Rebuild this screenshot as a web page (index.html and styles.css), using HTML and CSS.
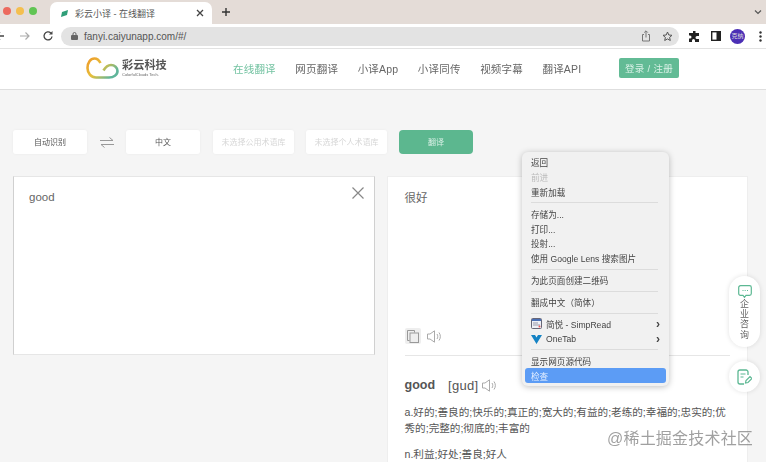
FILE: index.html
```html
<!DOCTYPE html>
<html lang="zh-CN">
  <head>
    <meta charset="UTF-8" />
    <title>彩云小译 - 在线翻译</title>
    <link rel="stylesheet" href="styles.css">
  </head>
  <body>
    <div class="tabstrip">
      <div class="traffic">
        <span class="dot red"></span>
        <span class="dot yellow"></span>
        <span class="dot green"></span>
      </div>
      <div class="tab">
        <svg class="favicon" width="8" height="7" viewBox="0 0 8 7"><path d="M1 2 7 0 6 5 0 7z" fill="#2f9e78"/></svg>
        <span class="tab-title">彩云小译 - 在线翻译</span>
        <svg class="tab-close" width="8" height="8" viewBox="0 0 8 8"><path d="M1 1l6 6M7 1 1 7" stroke="#444" stroke-width="1.3"/></svg>
      </div>
      <svg class="tab-new" width="10" height="10" viewBox="0 0 10 10"><path d="M5 1v8M1 5h8" stroke="#333" stroke-width="1.4"/></svg>
      <svg class="tab-more" width="8" height="6" viewBox="0 0 8 6"><path d="M1 1.500l3 3 3-3" fill="none" stroke="#555" stroke-width="1.2"/></svg>
    </div>

    <div class="toolbar">
      <svg class="nav" width="12" height="12" viewBox="0 0 12 12"><path d="M8 6H0M4 2 0 6l4 4" fill="none" stroke="#444" stroke-width="1.3"/></svg>
      <svg class="nav nav-fwd" width="12" height="12" viewBox="0 0 12 12"><path d="M1 6h9M6.500 2.500 10 6l-3.500 3.500" fill="none" stroke="#aaa" stroke-width="1.2"/></svg>
      <svg class="nav nav-reload" width="12" height="12" viewBox="0 0 12 12"><path d="M10 6.500A4 4 0 1 1 8.800 3" fill="none" stroke="#444" stroke-width="1.3"/><path d="M10.500 1v3.500H7z" fill="#444"/></svg>
      <div class="omnibox">
        <svg class="lock" width="7" height="8" viewBox="0 0 7 8"><path d="M2 3.500V2a1.500 1.500 0 0 1 3 0v1.500" fill="none" stroke="#666"/><rect y="3" width="7" height="5" rx="1" fill="#666"/></svg>
        <span class="url">fanyi.caiyunapp.com/#/</span>
        <svg class="omni-share" width="10" height="12" viewBox="0 0 10 12"><path d="M3 4.500H1.500v6.500h7V4.500H7M5 7.500V1M3.200 2.600 5 .8l1.800 1.800" fill="none" stroke="#777"/></svg>
        <svg class="omni-star" width="11" height="11" viewBox="0 0 11 11"><path d="M5.500 1l1.300 3 3.200.3-2.400 2.100.7 3.100-2.800-1.600-2.800 1.600.7-3.100L1 4.300 4.200 4z" fill="none" stroke="#555"/></svg>
      </div>
      <svg class="ext" width="11" height="11" viewBox="0 0 11 11"><path d="M4 0h2.500v2H10v3H8a1.500 1.500 0 0 0 0 3h2v3H6V9.500a1.500 1.500 0 0 0-3 0V11H0V7.500h1a1.500 1.500 0 0 0 0-3H0V2h4z" fill="#222"/></svg>
      <svg class="side" width="10" height="10" viewBox="0 0 10 10"><rect x=".7" y=".7" width="8.600" height="8.600" fill="none" stroke="#222" stroke-width="1.4"/><rect x="5.500" y="1" width="4" height="8" fill="#222"/></svg>
      <span class="avatar">克纳</span>
      <svg class="kebab" width="3" height="11" viewBox="0 0 3 11"><circle cx="1.500" cy="1.500" r="1.200" fill="#333"/><circle cx="1.500" cy="5.500" r="1.200" fill="#333"/><circle cx="1.500" cy="9.500" r="1.200" fill="#333"/></svg>
    </div>

    <header class="site-header">
      <div class="logo">
        <svg width="33" height="22" viewBox="0 0 33 22">
          <defs>
            <linearGradient id="cloud" x1="0" y1="0" x2="1" y2="0.600">
              <stop offset="0" stop-color="#ef9a2a"/>
              <stop offset=".5" stop-color="#e6c03c"/>
              <stop offset="1" stop-color="#5fb59a"/>
            </linearGradient>
          </defs>
          <path d="M14.500 6C13 3 10.500 1.500 8.500 1.500 4.500 1.500 1.500 5.500 1.500 11c0 5 3.500 9.500 8.500 9.500h13c4.500 0 8.500-2.500 8.500-6.500 0-3.500-3-6-6.500-6-3 0-5.500 2-7.500 5.500" fill="none" stroke="url(#cloud)" stroke-width="2.600"/>
        </svg>
        <div class="logo-text">
          <div class="logo-name">彩云科技</div>
          <div class="logo-sub">ColorfulClouds Tech.</div>
        </div>
      </div>
      <nav class="site-nav">
        <a class="active">在线翻译</a>
        <a>网页翻译</a>
        <a>小译App</a>
        <a>小译同传</a>
        <a>视频字幕</a>
        <a>翻译API</a>
      </nav>
      <button class="login">登录 / 注册</button>
    </header>

    <main class="content">
      <div class="controls">
        <div class="select lang">自动识别</div>
        <svg class="swap" width="14" height="11" viewBox="0 0 14 11"><path d="M0 3.500h13L9.500.5M14 7.500H1l3.500 3" fill="none" stroke="#999" stroke-width="1"/></svg>
        <div class="select lang">中文</div>
        <div class="select lib">未选择公用术语库</div>
        <div class="select lib">未选择个人术语库</div>
        <button class="go">翻译</button>
      </div>

      <div class="panels">
        <section class="panel source">
          <p class="source-text">good</p>
          <svg class="clear" width="12" height="12" viewBox="0 0 12 12"><path d="M.5.500l11 11M11.500.500l-11 11" stroke="#888" stroke-width="1.200"/></svg>
        </section>
        <section class="panel target">
          <p class="target-text">很好</p>
          <div class="target-tools">
            <span class="copy-wrap">
              <svg width="12" height="13" viewBox="0 0 12 13"><path d="M.5.500h7v2M.5.500v10h2" fill="none" stroke="#999"/><rect x="3" y="3" width="8.500" height="9.500" fill="none" stroke="#999"/></svg>
            </span>
            <svg width="15" height="13" viewBox="0 0 15 13"><path d="M.5 4H3L7.500.8v11.400L3 9H.5zM10 4c1 1.500 1 3.500 0 5M12 2.500c1.800 2.500 1.800 5.500 0 8" fill="none" stroke="#aaa"/></svg>
          </div>
          <div class="dict">
            <div class="dict-head">
              <b>good</b>
              <span class="phonetic">[gud]</span>
              <svg width="15" height="13" viewBox="0 0 15 13"><path d="M.5 4H3L7.500.8v11.400L3 9H.5zM10 4c1 1.500 1 3.500 0 5M12 2.500c1.800 2.500 1.800 5.500 0 8" fill="none" stroke="#aaa"/></svg>
            </div>
            <p>a.好的;善良的;快乐的;真正的;宽大的;有益的;老练的;幸福的;忠实的;优</p>
            <p class="cont">秀的;完整的;彻底的;丰富的</p>
            <p>n.利益;好处;善良;好人</p>
          </div>
        </section>
      </div>
    </main>

    <div class="context-menu">
      <div class="item">返回</div>
      <div class="item off">前进</div>
      <div class="item">重新加载</div>
      <hr>
      <div class="item">存储为...</div>
      <div class="item">打印...</div>
      <div class="item">投射...</div>
      <div class="item">使用 Google Lens 搜索图片</div>
      <hr>
      <div class="item">为此页面创建二维码</div>
      <hr>
      <div class="item">翻成中文（简体）</div>
      <hr>
      <div class="item sub">
        <svg width="11" height="11" viewBox="0 0 11 11"><rect x=".5" y=".5" width="10" height="10" rx="1" fill="#eef0f6" stroke="#667"/><rect x="1" y="1" width="9" height="2" fill="#4a6fb5"/><path d="M2 5h5M2 7h7" stroke="#99a"/><circle cx="8.500" cy="8.500" r="1" fill="#e55"/></svg>
        <span>简悦 - SimpRead</span><i>›</i>
      </div>
      <div class="item sub">
        <svg width="11" height="11" viewBox="0 0 11 11"><path d="M0 2h4l1.500 2.500L7 2h4L5.500 11z" fill="#1583c4"/></svg>
        <span>OneTab</span><i>›</i>
      </div>
      <hr>
      <div class="item">显示网页源代码</div>
      <div class="item picked">检查</div>
    </div>

    <aside class="float-tools">
      <div class="consult">
        <svg width="14" height="13" viewBox="0 0 14 13"><path d="M2.500.7h9a1.800 1.800 0 0 1 1.800 1.800v6a1.800 1.800 0 0 1-1.800 1.800H8l-1.500 2-1.500-2H2.500A1.800 1.800 0 0 1 .7 8.500v-6A1.800 1.800 0 0 1 2.500.7z" fill="none" stroke="#5cb893" stroke-width="1.200"/><path d="M4.500 5.500h1M6.700 5.500h1M9 5.500h1" stroke="#5cb893"/></svg>
        <span>企</span><span>业</span><span>咨</span><span>询</span>
      </div>
      <div class="feedback">
        <svg width="15" height="16" viewBox="0 0 15 16"><path d="M11 6V3a2 2 0 0 0-2-2H3a2 2 0 0 0-2 2v10a2 2 0 0 0 2 2h4" fill="none" stroke="#5cb893" stroke-width="1.300"/><path d="M3.500 5h5M3.500 8h3" stroke="#5cb893" stroke-width="1.200"/><path d="M8.500 14l.5-2.500 4-4 2 2-4 4z" fill="none" stroke="#5cb893" stroke-width="1.200"/></svg>
      </div>
    </aside>

    <div class="watermark">@稀土掘金技术社区</div>
  </body>
</html>
```

FILE: styles.css
```css
* {
  box-sizing: border-box;
}

body {
  margin: 0;
  height: 462px;
  overflow: hidden;
  font-family: "Liberation Sans", "Noto Sans CJK SC", sans-serif;
  background-color: #f5f5f5;
  color: #555;
  filter: blur(0.35px);
}

svg {
  display: block;
  flex: none;
}

/* browser chrome */
.tabstrip {
  display: flex;
  align-items: flex-end;
  height: 24px;
  background: #e4dcd7;
}

.traffic {
  display: flex;
  gap: 5px;
  align-self: center;
  width: 50px;
  margin-bottom: 2px;
  padding-left: 3px;
}

.dot {
  width: 8px;
  height: 8px;
  border-radius: 50%;
}

.red { background: #ec6a5e; }
.yellow { background: #f4bf4f; }
.green { background: #61c554; }

.tab {
  display: flex;
  align-items: center;
  width: 162px;
  height: 22px;
  padding: 0 8px 0 11px;
  background: white;
  border-radius: 7px 7px 0 0;
}

.tab-title {
  flex: 1;
  margin-left: 6px;
  font-size: 9px;
  color: #555;
}

.tab-new {
  align-self: center;
  margin-left: 9px;
}

.tab-more {
  align-self: center;
  margin-left: auto;
  margin-right: 4px;
}

.toolbar {
  display: flex;
  align-items: center;
  height: 25px;
  background: white;
  border-bottom: 1px solid #e2e2e2;
}

.nav {
  margin-left: -4px;
}

.nav-fwd {
  margin-left: 11px;
}

.nav-reload {
  margin-left: 11px;
}

.omnibox {
  display: flex;
  align-items: center;
  width: 618px;
  height: 19px;
  margin-left: 7px;
  padding: 0 6px 0 10px;
  background: #e3e3e3;
  border-radius: 10px;
}

.url {
  flex: 1;
  margin-left: 6px;
  font-size: 10px;
  color: #555;
}

.omni-star {
  margin-left: 11px;
}

.ext {
  margin-left: 10px;
}

.side {
  margin-left: 11px;
}

.avatar {
  width: 15px;
  height: 15px;
  margin-left: 9px;
  border-radius: 50%;
  background: #4b2fb5;
  color: #ddd;
  font-size: 6px;
  line-height: 15px;
  text-align: center;
}

.kebab {
  margin-left: 14px;
}

/* site header */
.site-header {
  display: flex;
  align-items: center;
  height: 41px;
  padding: 0 0 2px 86px;
  background: white;
  border-bottom: 1px solid #dedede;
}

.logo {
  display: flex;
  align-items: center;
  gap: 3px;
  width: 147px;
}

.logo-name {
  font-size: 11.200px;
  font-weight: bold;
  color: #555;
  line-height: 14px;
}

.logo-sub {
  font-size: 4px;
  color: #666;
  line-height: 6px;
}

.site-nav {
  display: flex;
  gap: 19.500px;
  width: 386px;
  font-size: 10.500px;
  letter-spacing: 0.200px;
  color: #666;
}

.site-nav .active {
  color: #74c3a2;
}

.login {
  width: 60px;
  height: 20px;
  padding: 0;
  border: none;
  border-radius: 2px;
  background: #62bb95;
  color: #d8f0e6;
  font-family: inherit;
  font-size: 9.500px;
  letter-spacing: 0.300px;
}

/* page */
.content {
  padding: 40px 18px 0 13px;
}

.controls {
  display: flex;
  align-items: center;
  height: 24px;
  font-size: 8px;
}

.select {
  display: flex;
  align-items: center;
  justify-content: center;
  height: 24px;
  padding-bottom: 1px;
  background: white;
  border-radius: 3px;
  box-shadow: 0 0 3px rgba(0, 0, 0, 0.05);
}

.lang {
  width: 74px;
}

.lib {
  width: 81px;
  margin-right: 12px;
  color: #d6d6d6;
}

.swap {
  margin: 0 12px 0 13px;
}

.lang + .lib {
  margin-left: 13px;
}

.go {
  width: 74px;
  height: 24px;
  padding: 0 0 1px;
  border: none;
  border-radius: 4px;
  background: #5cb78f;
  color: #d8f0e6;
  font-family: inherit;
  font-size: 8px;
}

.panels {
  display: flex;
  gap: 12px;
  margin-top: 22px;
}

.panel {
  position: relative;
  background: white;
  border: 1px solid #e6e6e6;
}

.source {
  width: 362px;
  height: 179px;
  padding: 14px 15px;
  border-left-color: #d0d0d0;
  border-right-color: #d0d0d0;
}

.source-text,
.target-text {
  margin: 0;
  font-size: 11.500px;
  line-height: 13px;
  color: #666;
}

.clear {
  position: absolute;
  top: 10px;
  right: 10px;
}

.target {
  width: 362px;
  height: 300px;
  padding: 15px 17px;
  border-color: #eeeeee;
}

.target-tools {
  display: flex;
  align-items: center;
  gap: 6px;
  margin-top: 123px;
  height: 16px;
}

.copy-wrap {
  display: flex;
  align-items: center;
  justify-content: center;
  width: 16px;
  height: 16px;
  background: #eeeeee;
  border-radius: 2px;
}

.dict {
  margin-top: 11px;
  padding-top: 19px;
  border-top: 1px solid #e6e6e6;
}

.dict-head {
  display: flex;
  align-items: center;
  height: 20px;
  font-size: 12.500px;
  color: #555;
}

.phonetic {
  margin: 0 4px 0 13px;
  font-size: 13px;
  letter-spacing: 0.300px;
}

.dict p {
  width: fit-content;
  margin: 10px 0 0;
  font-size: 10.600px;
  line-height: 16px;
  white-space: nowrap;
  color: #555;
}

.dict p:first-of-type {
  margin-top: 9px;
}

.dict p.cont {
  margin-top: 0;
}

/* right click menu */
.context-menu {
  position: absolute;
  left: 522px;
  top: 152px;
  width: 147px;
  height: 234px;
  padding: 2.500px 3px;
  background: #f1f1f1;
  border-radius: 6px;
  box-shadow: 0 1px 6px rgba(0, 0, 0, 0.25);
  font-size: 8.600px;
  color: #444;
}

.item {
  display: flex;
  align-items: center;
  height: 14.900px;
  padding-left: 6px;
}

.item.off {
  color: #bbb;
}

.item.picked {
  background: #5c9cf5;
  border-radius: 3px;
  color: #e6f0ff;
}

.sub span {
  flex: 1;
  margin-left: 4px;
}

.sub i {
  margin-right: 6px;
  font-size: 12px;
  font-style: normal;
  font-weight: bold;
  line-height: 12px;
}

.context-menu hr {
  height: 1px;
  margin: 3px 8px 3px 6px;
  border: none;
  background: #dcdcdc;
}

/* floating tools */
.float-tools {
  position: absolute;
  left: 729px;
  top: 276px;
  display: flex;
  flex-direction: column;
  align-items: center;
  gap: 14px;
}

.consult {
  display: flex;
  flex-direction: column;
  align-items: center;
  width: 31px;
  height: 71px;
  padding-top: 9px;
  background: white;
  border-radius: 16px;
  box-shadow: 0 0 5px rgba(0, 0, 0, 0.12);
  font-size: 9px;
  line-height: 10.200px;
  color: #666;
}

.consult svg {
  margin-bottom: 1px;
}

.feedback {
  display: flex;
  align-items: center;
  justify-content: center;
  width: 31px;
  height: 31px;
  background: white;
  border-radius: 50%;
  box-shadow: 0 0 5px rgba(0, 0, 0, 0.12);
}

.watermark {
  position: absolute;
  left: 607px;
  top: 425px;
  font-size: 16px;
  color: rgba(120, 120, 120, 0.7);
  letter-spacing: 0.200px;
}
```
